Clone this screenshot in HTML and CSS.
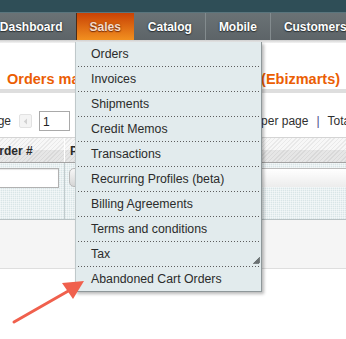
FILE: index.html
```html
<!DOCTYPE html>
<html>
<head>
<meta charset="utf-8">
<link rel="stylesheet" href="styles.css">
</head>
<body>
<div class="topbar"></div>
<nav class="nav">
  <a class="tab">Dashboard</a>
  <a class="tab active">Sales</a>
  <a class="tab">Catalog</a>
  <a class="tab sep">Mobile</a>
  <a class="tab sep">Customers</a>
</nav>
<div class="nav-shadow"></div>
<main class="content">
  <h1 class="title">Orders made from Abandoned Carts (Ebizmarts)</h1>
  <div class="pager">
    <div class="pager-left">
      <span>Page</span>
      <span class="prev"><svg width="5" height="7" viewBox="0 0 5 7"><path d="M4 0.5 L0.8 3.5 L4 6.5 Z" fill="#d2d2d2"/></svg></span>
      <span class="page-input">1</span>
    </div>
    <div class="pager-right">
      <span>per page</span><span class="pipe">|</span><span>Total 0 records found</span>
    </div>
  </div>
  <div class="grid">
    <div class="grid-head">
      <div class="hcell c1">Order #</div>
      <div class="hcell c2">Purchased On</div>
    </div>
    <div class="grid-filter">
      <div class="fcell c1"><span class="finput"></span></div>
      <div class="fcell c2"><span class="fbutton"></span></div>
      <div class="fcell c3"><span class="fselect"></span><span class="fselect2"></span></div>
    </div>
    <div class="grid-empty"></div>
  </div>
</main>
<ul class="menu">
  <li>Orders</li>
  <li>Invoices</li>
  <li>Shipments</li>
  <li>Credit Memos</li>
  <li>Transactions</li>
  <li>Recurring Profiles (beta)</li>
  <li>Billing Agreements</li>
  <li>Terms and conditions</li>
  <li class="has-grip">Tax<svg class="grip" width="7" height="7" viewBox="0 0 7 7"><path d="M0.5 7 L7 0.5 M2.5 7 L7 2.5 M4.5 7 L7 4.5" stroke="#505657" stroke-width="1.1" fill="none"/></svg></li>
  <li class="last">Abandoned Cart Orders</li>
</ul>
<svg class="arrow" width="100" height="70" viewBox="0 270 100 70">
  <line x1="14" y1="322" x2="70" y2="290" stroke="#f0604d" stroke-width="3" stroke-linecap="round"/>
  <polygon points="84,281 62,283 73,299" fill="#f0604d"/>
</svg>
</body>
</html>
```
FILE: styles.css
```css
html, body {
  margin: 0;
  padding: 0;
}
body {
  width: 346px;
  height: 339px;
  overflow: hidden;
  position: relative;
  background: #fff;
  font-family: "Liberation Sans", Arial, sans-serif;
  color: #2f2f2f;
}
.topbar {
  height: 12px;
  background: #2f4e57;
  border-bottom: 1px solid #5a757d;
}
.nav {
  display: flex;
  height: 27px;
  margin-left: -13.7px;
  background: linear-gradient(#6a7275, #5d6468);
  white-space: nowrap;
}
.tab {
  display: flex;
  align-items: center;
  padding: 0 13.5px;
  font-size: 12px;
  font-weight: bold;
  color: #fff;
  text-shadow: 0 0 2px #2c3234, 0 1px 1px #2c3234;
}
.tab.active {
  background: linear-gradient(#c84205, #f29020);
  color: #f5dccb;
  text-shadow: 0 0 2px #8a3a10, 0 1px 1px #7a3008;
  box-shadow: inset 1px 0 0 #4b2c18;
}
.tab.sep {
  box-shadow: inset 1px 0 0 #838b8e;
}
.nav-shadow {
  height: 3px;
  background: linear-gradient(#cfcfcf, #f4f4f4);
}
.content {
  display: block;
}
.title {
  margin: 27px 0 0;
  padding: 0 0 1px 7px;
  font-size: 14.5px;
  line-height: 18px;
  font-weight: bold;
  color: #eb5e04;
  white-space: nowrap;
  border-bottom: 4px solid #dedede;
}
.pager {
  display: flex;
  align-items: center;
  height: 20px;
  margin: 18px 0 0 -17px;
  font-size: 12px;
  white-space: nowrap;
}
.pager-left {
  display: flex;
  align-items: center;
}
.prev {
  display: flex;
  align-items: center;
  justify-content: center;
  width: 11px;
  height: 12px;
  margin-left: 8px;
  border: 1px solid #e2e2e2;
  background: #f4f4f4;
  border-radius: 2px;
}
.page-input {
  box-sizing: border-box;
  width: 31px;
  height: 20px;
  margin-left: 7px;
  padding: 3px 0 0 3px;
  border: 1px solid #a9a9a9;
  background: #fff;
  color: #222;
  font-size: 12px;
  line-height: 14px;
}
.pager-right {
  display: flex;
  margin-left: 191px;
  color: #2f2f2f;
}
.pipe {
  margin: 0 8px;
  color: #4a4a8a;
}
.grid {
  margin: 6px 0 0 -14px;
  width: 380px;
}
.grid-head {
  display: flex;
  height: 24px;
  border-top: 1px solid #d4d4d4;
  border-bottom: 1px solid #a3a3a3;
  background:
    linear-gradient(rgba(0,0,0,0) 0 12px, rgba(0,0,0,0.07) 12px),
    repeating-linear-gradient(135deg, #e9e9e9 0 1px, #f7f7f7 1px 3px);
}
.hcell {
  display: flex;
  align-items: center;
  padding: 1px 0 0 5px;
  font-size: 12px;
  font-weight: bold;
  color: #2b2b2b;
  white-space: nowrap;
}
.c1 {
  box-sizing: border-box;
  width: 79px;
  flex: none;
}
.hcell.c1 {
  padding-left: 4px;
  border-right: 1px solid #fff;
}
.grid-filter {
  display: flex;
  height: 56px;
  border-bottom: 1px solid #b9c2c4;
  background-color: #d9e5e7;
  background-image:
    linear-gradient(90deg, rgba(255,255,255,0.45) 1px, transparent 1px),
    linear-gradient(rgba(255,255,255,0.45) 1px, transparent 1px);
  background-size: 2px 2px;
}
.fcell {
  padding-top: 5px;
}
.fcell.c1 {
  padding-right: 5px;
  border-right: 1px solid #c2cbcd;
  display: flex;
  justify-content: flex-end;
}
.finput {
  box-sizing: border-box;
  width: 70px;
  height: 20px;
  border: 1px solid #b1b1b1;
  background: #fff;
  box-shadow: inset 0 1px 1px #e6e6e6;
}
.fcell.c2 {
  width: 185px;
  flex: none;
  padding-left: 4px;
}
.fbutton {
  display: block;
  width: 40px;
  height: 19px;
  border-radius: 5px;
  border: 1px solid #b9b9b9;
  background: linear-gradient(#f7f7f7, #d6d6d6);
  box-sizing: border-box;
}
.fcell.c3 {
  display: flex;
}
.fselect, .fselect2 {
  display: block;
  box-sizing: border-box;
  height: 19px;
  border-top: 1px solid #bcbcbc;
  background: linear-gradient(#ffffff, #ececec);
}
.fselect {
  width: 93px;
  border-right: 1px solid #c4c4c4;
}
.fselect2 {
  width: 40px;
}
.grid-empty {
  height: 48px;
  background: #f5f5f5;
  border-bottom: 1px solid #dedede;
}
.menu {
  position: absolute;
  left: 75px;
  top: 42px;
  width: 185px;
  margin: 0;
  padding: 0;
  list-style: none;
  background: #e2ebed;
  border-left: 1px solid #bfc8ca;
  border-right: 1px solid #8f989a;
  border-bottom: 1px solid #8f989a;
  box-shadow: 2px 2px 3px rgba(0,0,0,0.28);
  z-index: 5;
}
.menu li {
  display: flex;
  justify-content: space-between;
  height: 25px;
  line-height: 24px;
  margin: 0 2px;
  padding-left: 13px;
  font-size: 12.3px;
  color: #2b2b2b;
  white-space: nowrap;
  background-image: linear-gradient(90deg, #5d5d5d 1px, transparent 1px);
  background-size: 3px 1px;
  background-repeat: repeat-x;
  background-position: 0 100%;
}
.menu li.last {
  height: 24px;
  background: none;
}
.grip {
  align-self: flex-end;
  margin: 0 -1px 3px 0;
}
.arrow {
  position: absolute;
  left: 0;
  top: 270px;
  z-index: 6;
}
```
